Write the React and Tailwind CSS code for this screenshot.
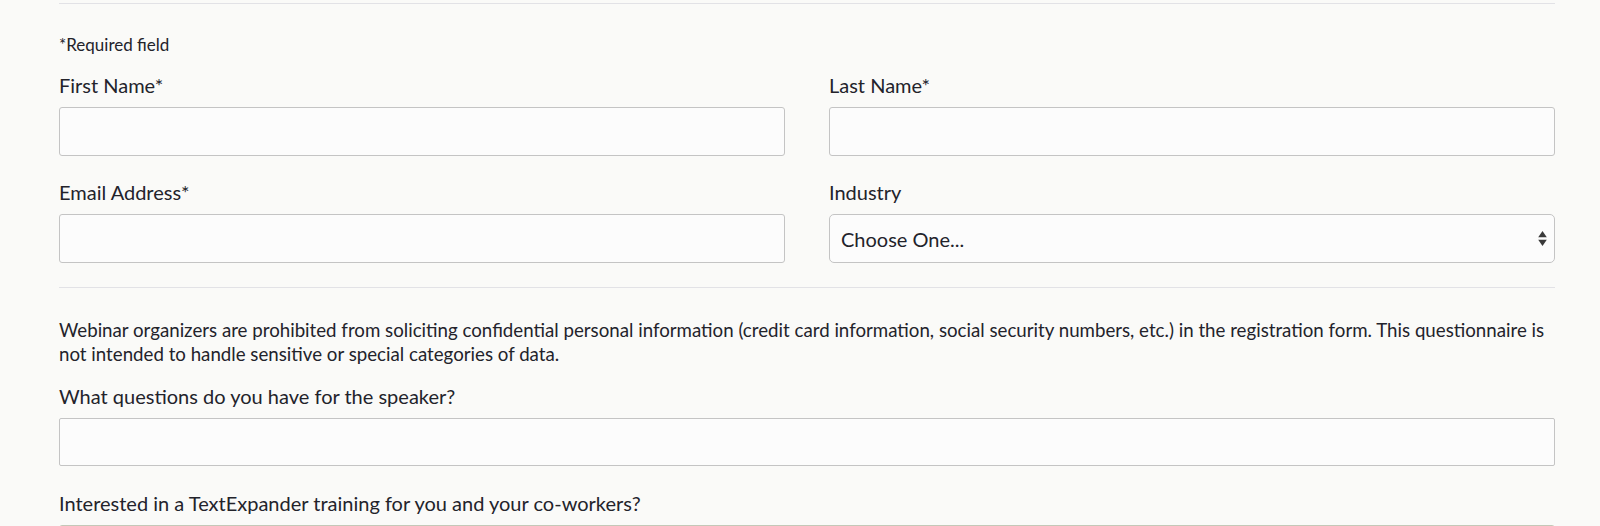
export default function App() {
  const font = { fontFamily: 'Lato, "Open Sans", sans-serif' };
  return (
    <div className="h-[526px] w-full bg-[#fafaf8] text-[#23232b] overflow-hidden" style={font}>
      <div className="ml-[59px] w-[1496px]">
        <div className="h-[3px]" />
        <div className="border-t border-[#e2e2e6]" />
        <div className="mt-[29px] text-[17px] leading-[24px]">*Required field</div>
        <div className="mt-[16px] grid grid-cols-2 gap-x-[44px]">
          <div className="flex flex-col">
            <label className="text-[20px] leading-[24px]">First Name*</label>
            <input className="mt-[10px] h-[49px] rounded-[3px] border border-[#c4c4c4] bg-[#fcfcfc]" />
          </div>
          <div className="flex flex-col">
            <label className="text-[20px] leading-[24px]">Last Name*</label>
            <input className="mt-[10px] h-[49px] rounded-[3px] border border-[#c4c4c4] bg-[#fcfcfc]" />
          </div>
          <div className="mt-[24px] flex flex-col">
            <label className="text-[20px] leading-[24px]">Email Address*</label>
            <input className="mt-[10px] h-[49px] rounded-[3px] border border-[#c4c4c4] bg-[#fcfcfc]" />
          </div>
          <div className="mt-[24px] flex flex-col">
            <label className="text-[20px] leading-[24px]">Industry</label>
            <div className="mt-[10px] h-[49px] rounded-[5px] border border-[#c4c4c4] bg-[#fcfcfc] flex items-center justify-between pl-[11px] pr-[7px]">
              <span className="text-[20px]">Choose One...</span>
              <svg width="9" height="17" viewBox="0 0 9 17">
                <path d="M4.5 1 L8.8 7.3 L0.2 7.3 Z" fill="#3a3a3a" />
                <path d="M4.5 16 L8.8 9.7 L0.2 9.7 Z" fill="#3a3a3a" />
              </svg>
            </div>
          </div>
        </div>
        <div className="mt-[24px] border-t border-[#e2e2e6]" />
        <p className="mt-[30px] text-[18.7px] leading-[24px]">
          Webinar organizers are prohibited from soliciting confidential personal information (credit card information, social security numbers, etc.) in the registration form. This questionnaire is not intended to handle sensitive or special categories of data.
        </p>
        <div className="mt-[18px] flex flex-col">
          <label className="text-[20px] leading-[24px]">What questions do you have for the speaker?</label>
          <input className="mt-[10px] h-[48px] rounded-[2px] border border-[#c4c4c4] bg-[#fcfcfc]" />
        </div>
        <div className="mt-[25px] flex flex-col">
          <label className="text-[20px] leading-[24px]">Interested in a TextExpander training for you and your co-workers?</label>
          <div className="mt-[10px] h-[48px] rounded-[3px] border border-[#c4c8b8] bg-[#fcfcfc]" />
        </div>
      </div>
    </div>
  );
}
